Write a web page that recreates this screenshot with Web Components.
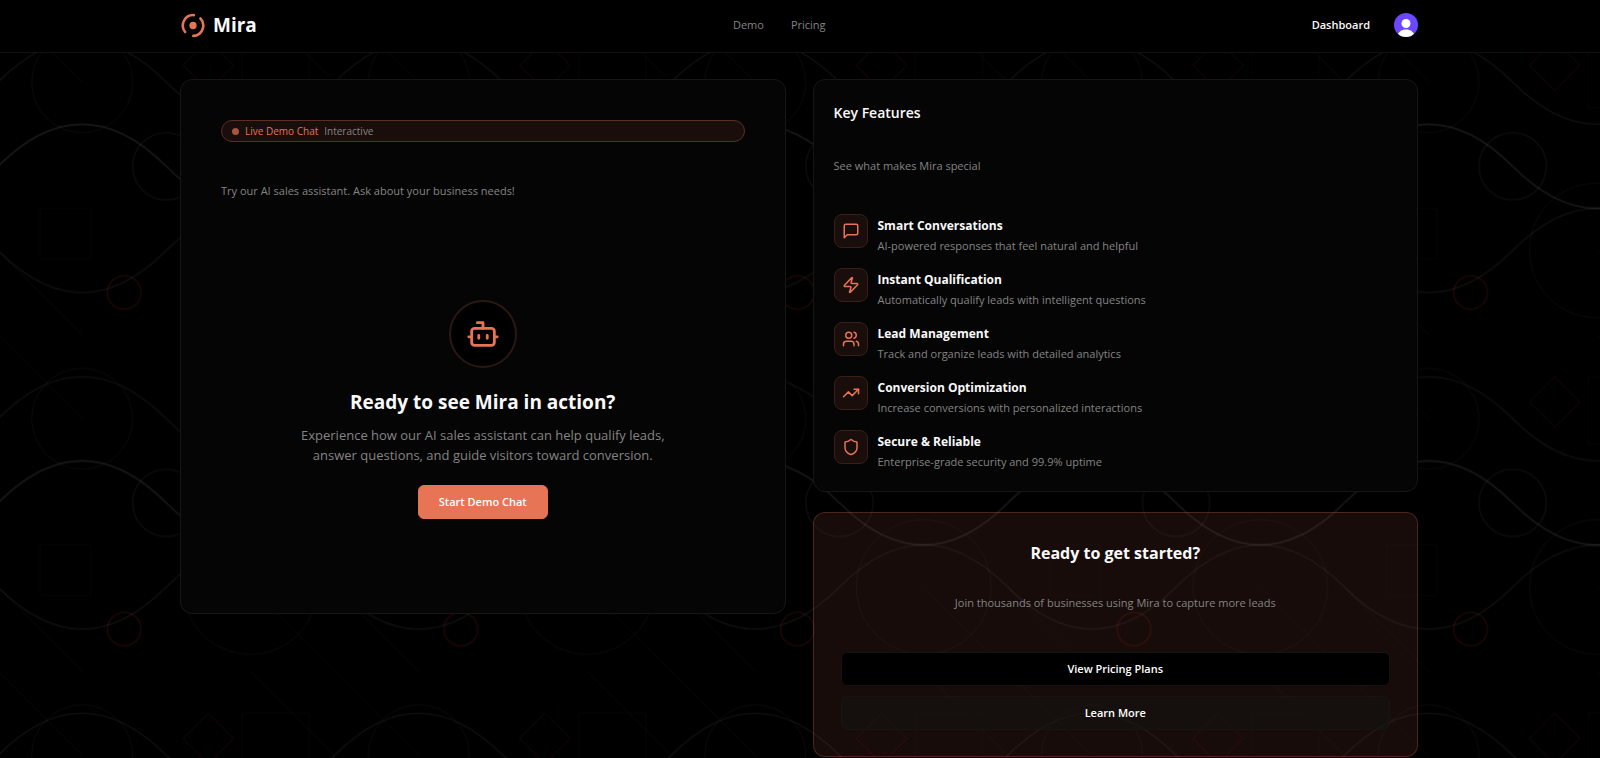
<!DOCTYPE html>
<html lang="en">
<head>
<meta charset="utf-8">
<meta name="viewport" content="width=device-width, initial-scale=1">
<title>Mira – Demo</title>
<style>
  html { background: #000; }
  body {
    margin: 0;
    color: #fafafa;
    font: 400 11px/16px "Open Sans", "Noto Sans", sans-serif;
    --accent: #e67455;
    --muted: #848484;
    --line: #161616;
    --page: 1240px;
  }
</style>
</head>
<body>
<mira-app></mira-app>

<script>
const define = (name, html, setup) => {
  const tpl = document.createElement('template');
  tpl.innerHTML = html;
  customElements.define(name, class extends HTMLElement {
    constructor() {
      super();
      this.attachShadow({ mode: 'open' }).append(tpl.content.cloneNode(true));
    }
    connectedCallback() { if (setup) setup(this, this.shadowRoot); }
  });
};

/* 24-unit line icons */
const ICONS = {
  bot: '<path d="M12 8V4H8"/><rect width="16" height="12" x="4" y="8" rx="2"/><path d="M2 14h2M20 14h2M15 13v2M9 13v2"/>',
  chat: '<path d="M21 15a2 2 0 0 1-2 2H7l-4 4V5a2 2 0 0 1 2-2h14a2 2 0 0 1 2 2z"/>',
  zap: '<path d="M4 14a1 1 0 0 1-.78-1.63l9.9-10.2a.5.5 0 0 1 .86.46l-1.92 6.02A1 1 0 0 0 13 10h7a1 1 0 0 1 .78 1.63l-9.9 10.2a.5.5 0 0 1-.86-.46l1.92-6.02A1 1 0 0 0 11 14z"/>',
  users: '<path d="M16 21v-2a4 4 0 0 0-4-4H6a4 4 0 0 0-4 4v2"/><circle cx="9" cy="7" r="4"/><path d="M22 21v-2a4 4 0 0 0-3-3.87M16 3.13a4 4 0 0 1 0 7.75"/>',
  trend: '<path d="m22 7-8.5 8.5-5-5L2 17"/><path d="M16 7h6v6"/>',
  shield: '<path d="M20 13c0 5-3.5 7.5-7.66 8.95a1 1 0 0 1-.67-.01C7.5 20.5 4 18 4 13V6a1 1 0 0 1 1-1c2 0 4.5-1.2 6.24-2.72a1.17 1.17 0 0 1 1.52 0C14.51 3.81 17 5 19 5a1 1 0 0 1 1 1z"/>'
};

define('mira-icon', `
  <style>
    :host { display: block; width: var(--icon-size, 18px); height: var(--icon-size, 18px); }
    svg { display: block; width: 100%; height: 100%; fill: none; stroke: currentColor;
      stroke-width: 2; stroke-linecap: round; stroke-linejoin: round; }
  </style>
  <svg viewBox="0 0 24 24" aria-hidden="true"></svg>`,
  (el, root) => { root.querySelector('svg').innerHTML = ICONS[el.getAttribute('name')]; });

define('mira-backdrop', `
  <style>
    :host { position: absolute; inset: 0; z-index: -1; overflow: hidden; }
    svg { display: block; width: 100%; height: 100%; }
  </style>
  <svg aria-hidden="true">
    <defs>
      <pattern id="tile" width="400" height="400" patternUnits="userSpaceOnUse"
        patternTransform="translate(-2 -2) scale(.8415)">
        <g fill="none" stroke="#fff">
          <path d="M0 200Q100 100 200 200T400 200" stroke-width="2" opacity=".09"/>
          <path d="M0 100Q100 0 200 100T400 100M0 300Q100 400 200 300T400 300" stroke-width="1.5" opacity=".06"/>
          <circle cx="200" cy="200" r="40" stroke-width="1.5" opacity=".05"/>
          <circle cx="100" cy="100" r="60" opacity=".045"/>
          <circle cx="300" cy="300" r="80" opacity=".045"/>
          <path d="M50 250h60v60h-60zM290 50h80v80h-80z" opacity=".018"/>
          <path d="M0 0l100 100M300 0l100 100M0 300l100 100M300 300l100 100" opacity=".035"/>
        </g>
        <g fill="none" stroke="#e0242c">
          <circle cx="150" cy="350" r="20" stroke-width="1.5" opacity=".15"/>
          <path d="M250 50l30 30-30 30-30-30z" opacity=".15"/>
        </g>
      </pattern>
    </defs>
    <rect width="100%" height="100%" fill="url(#tile)"/>
  </svg>`);

define('mira-header', `
  <style>
    :host { display: block; padding-bottom: 2px; background: #000; border-bottom: 1px solid #111; }
    .bar { display: flex; align-items: center; justify-content: space-between; box-sizing: border-box;
      max-width: var(--page); height: 50px; margin: 0 auto; padding-right: 2px; }
    a { color: inherit; text-decoration: none; }
    .brand { display: flex; align-items: center; gap: 8px; font: 700 19px/24px "Open Sans", sans-serif; }
    .brand svg { width: 25px; height: 25px; }
    nav { display: flex; gap: 27px; color: var(--muted); }
    .user { display: flex; align-items: center; gap: 24px; padding-left: 10px; font-weight: 600; }
    button { display: block; width: 24px; height: 24px; padding: 0; border: 0; border-radius: 50%;
      background: #6c47ff; overflow: hidden; }
    button svg { display: block; }
  </style>
  <div class="bar">
    <a class="brand" href="#">
      <svg viewBox="0 0 24 24" fill="none" stroke="#e67455" stroke-width="2.5" stroke-linecap="round" aria-hidden="true">
        <circle cx="12.500" cy="12" r="3.5" fill="#e67455" stroke="none"/>
        <path d="M13.2 2A10 10 0 0 0 4.9 18.2"/>
        <path d="M19.6 5.2A10 10 0 0 1 12.800 22"/>
      </svg>Mira</a>
    <nav aria-label="Main"><a href="#demo">Demo</a><a href="#pricing">Pricing</a></nav>
    <div class="user">
      <a href="#dashboard">Dashboard</a>
      <button type="button" aria-label="Account">
        <svg viewBox="0 0 24 24" width="24" height="24" fill="#fff" aria-hidden="true">
          <circle cx="12" cy="10.500" r="4.500"/><path d="M3.500 24c0-5 4-7.500 8.500-7.500s8.500 2.500 8.500 7.500z"/>
        </svg>
      </button>
    </div>
  </div>`);

define('mira-card', `
  <style>
    :host { display: block; box-sizing: border-box; border: 1px solid var(--line); border-radius: 12px; background: #050505; }
    :host([tone="accent"]) { border-color: rgba(230,116,85,.25); background: rgba(230,116,85,.1); }
  </style>
  <slot></slot>`);

define('mira-button', `
  <style>
    :host { display: block; }
    button { display: block; width: 100%; height: 34px; padding: 0 20px; border: 1px solid var(--accent);
      border-radius: 6px; background: var(--accent); color: #fff; font: inherit; font-weight: 600; }
    :host([variant="dark"]) button { background: #000; border-color: #131313; }
    :host([variant="ghost"]) button { background: rgba(20,20,18,.6); border-color: #171412; }
  </style>
  <button type="button"><slot></slot></button>`);

define('mira-feature', `
  <style>
    :host { display: flex; gap: 10px; align-items: flex-start; }
    .box { display: grid; place-items: center; box-sizing: border-box; flex: none; width: 34px; height: 34px;
      border: 1px solid #3a1e17; border-radius: 8px; background: #190e0c; color: var(--accent); }
    .copy { display: grid; gap: 1px; padding-top: 2px; }
    h3 { margin: 0; font-size: 12px; line-height: 20px; font-weight: 700; }
    p { margin: 0; line-height: 18px; color: var(--muted); }
  </style>
  <div class="box"><mira-icon></mira-icon></div>
  <div class="copy"><h3><slot name="title"></slot></h3><p><slot></slot></p></div>`,
  (el, root) => {
    const icon = document.createElement('mira-icon');
    icon.setAttribute('name', el.getAttribute('icon'));
    root.querySelector('mira-icon').replaceWith(icon);
  });

define('mira-chat-demo', `
  <style>
    :host { display: block; }
    mira-card { padding: 40px; }
    .pill { display: flex; align-items: center; box-sizing: border-box; height: 22px; padding: 0 10px;
      border: 1px solid #5a2e23; border-radius: 11px; background: #1a0e0c; font-size: 10px; line-height: 20px; color: var(--accent); }
    .pill i { width: 7px; height: 7px; margin-right: 6px; border-radius: 50%; background: #a9543f; }
    .pill small { margin-left: 6px; font-size: inherit; color: var(--muted); }
    .lead { margin: 39px 0 0; line-height: 20px; color: var(--muted); }
    .stage { display: flex; flex-direction: column; align-items: center; justify-content: center;
      box-sizing: border-box; height: 372px; padding-top: 44px; text-align: center; }
    .bot { display: grid; place-items: center; box-sizing: border-box; width: 68px; height: 68px; border: 2px solid #2c1812;
      border-radius: 50%; background: #000; color: var(--accent); --icon-size: 34px; }
    h2 { margin: 20px 0 0; font-size: 19px; line-height: 28px; }
    .text { max-width: 376px; margin: 9px 0 20px; font-size: 13px; line-height: 20px; color: var(--muted); }
  </style>
  <mira-card>
    <div class="pill"><i></i><span>Live Demo Chat</span><small>Interactive</small></div>
    <p class="lead">Try our AI sales assistant. Ask about your business needs!</p>
    <div class="stage">
      <div class="bot"><mira-icon name="bot"></mira-icon></div>
      <h2>Ready to see Mira in action?</h2>
      <p class="text">Experience how our AI sales assistant can help qualify leads, answer questions, and guide visitors toward conversion.</p>
      <mira-button>Start Demo Chat</mira-button>
    </div>
  </mira-card>`);

define('mira-features', `
  <style>
    :host { display: block; }
    mira-card { padding: 20px; }
    h2 { margin: 3px 0 0; font-size: 14px; line-height: 20px; font-weight: 600; }
    .lead { margin: 33px 0 0; line-height: 20px; color: var(--muted); }
    .list { display: grid; gap: 13px; margin-top: 38px; }
  </style>
  <mira-card>
    <h2>Key Features</h2>
    <p class="lead">See what makes Mira special</p>
    <div class="list">
      <mira-feature icon="chat"><span slot="title">Smart Conversations</span>AI-powered responses that feel natural and helpful</mira-feature>
      <mira-feature icon="zap"><span slot="title">Instant Qualification</span>Automatically qualify leads with intelligent questions</mira-feature>
      <mira-feature icon="users"><span slot="title">Lead Management</span>Track and organize leads with detailed analytics</mira-feature>
      <mira-feature icon="trend"><span slot="title">Conversion Optimization</span>Increase conversions with personalized interactions</mira-feature>
      <mira-feature icon="shield"><span slot="title">Secure &amp; Reliable</span>Enterprise-grade security and 99.9% uptime</mira-feature>
    </div>
  </mira-card>`);

define('mira-cta', `
  <style>
    :host { display: block; }
    mira-card { padding: 26px 27px; text-align: center; }
    h2 { margin: 0; font-size: 16px; line-height: 28px; }
    .lead { margin: 26px 0 39px; line-height: 20px; color: var(--muted); }
    .actions { display: grid; gap: 10px; }
  </style>
  <mira-card tone="accent">
    <h2>Ready to get started?</h2>
    <p class="lead">Join thousands of businesses using Mira to capture more leads</p>
    <div class="actions">
      <mira-button variant="dark">View Pricing Plans</mira-button>
      <mira-button variant="ghost">Learn More</mira-button>
    </div>
  </mira-card>`);

define('mira-app', `
  <style>
    :host { display: block; position: relative; z-index: 0; min-height: 100vh; }
    main { display: grid; grid-template-columns: 1fr 1fr; align-items: start; gap: 27px; box-sizing: border-box;
      max-width: var(--page); margin: 0 auto; padding: 26px 2px 0 0; }
    .side { display: grid; gap: 20px; }
  </style>
  <mira-backdrop></mira-backdrop>
  <mira-header></mira-header>
  <main>
    <mira-chat-demo></mira-chat-demo>
    <div class="side"><mira-features></mira-features><mira-cta></mira-cta></div>
  </main>`);
</script>
</body>
</html>
